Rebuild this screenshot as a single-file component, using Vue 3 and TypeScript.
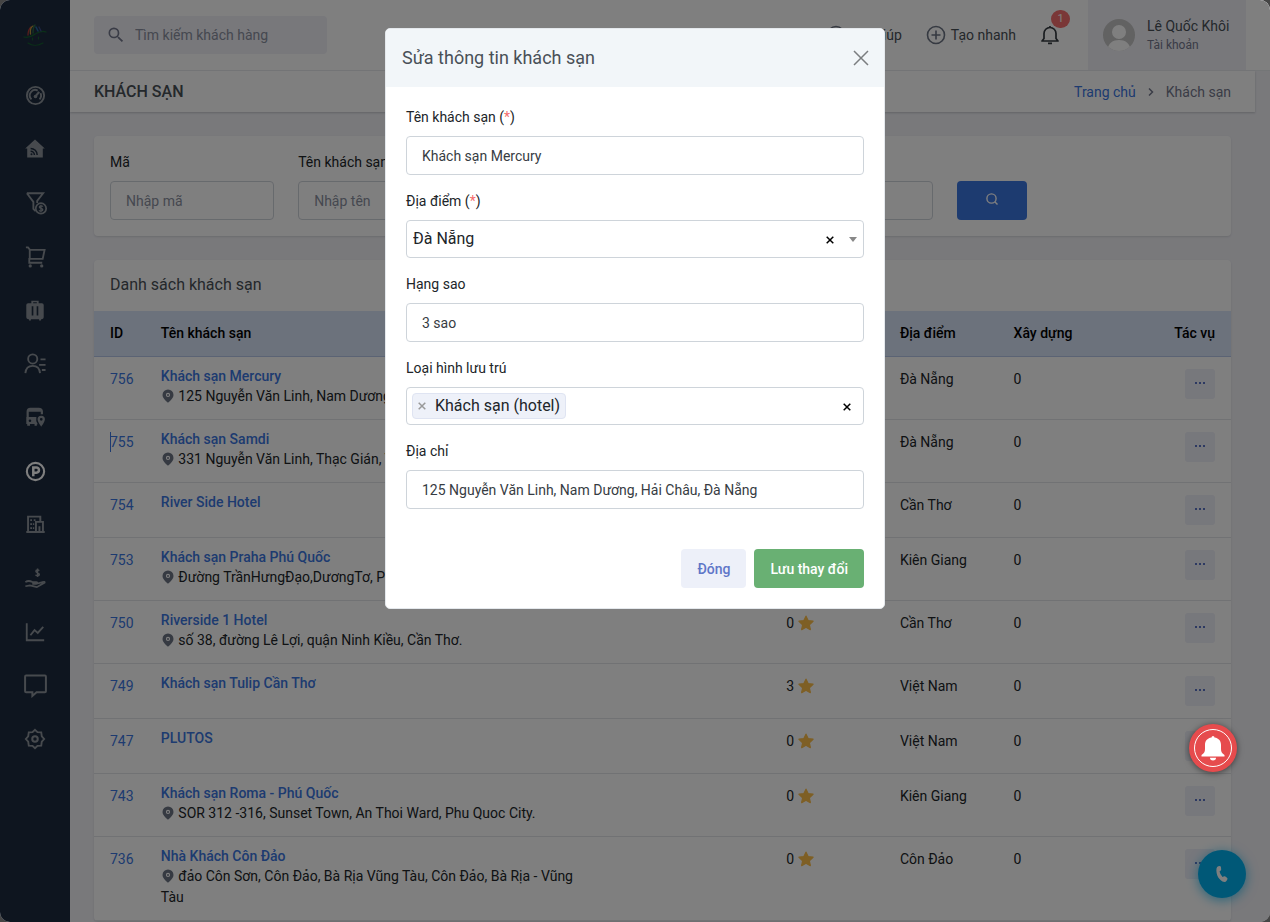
<script setup lang="ts">
import { ref } from 'vue'

interface NavItem { label: string; size: number; active?: boolean; art: string }
interface Hotel { id: number; name: string; address?: string; stars: number; place: string; caret?: boolean }

const navItems: NavItem[] = [
  { label: 'Tổng quan', size: 23, art: '<circle cx="12" cy="12" r="9" stroke-width="2"/><path d="M7.800 16A5.700 5.700 0 0 1 14.300 6.800M17.200 9.600A5.700 5.700 0 0 1 16.200 16" stroke-width="2"/><path d="M12 13L15.800 8.200" stroke-width="2.200"/><circle cx="12" cy="13" r="1.900" fill="currentColor" stroke="none"/>' },
  { label: 'Bảng tin', size: 24, art: '<path d="M12 2.500L21.800 11.500H19.800V20.500H4.200V11.500H2.200Z" fill="currentColor" stroke="none"/><g stroke="#1d2b3f" stroke-width="1.500"><path d="M7.600 11.400A6.600 6.600 0 0 1 14.200 18"/><path d="M7.600 14.200A3.800 3.800 0 0 1 11.400 18"/></g><circle cx="8.500" cy="17.200" r="1" fill="#1d2b3f" stroke="none"/>' },
  { label: 'Cơ hội', size: 26, art: '<path d="M4.500 3H19.500L14 10V12M4.500 3L10.500 11V17.500L12.500 19.500M14 10V11.500" stroke-width="1.700"/><circle cx="17.500" cy="17" r="4.800" stroke-width="1.600"/><path d="M19.200 15.300C18.700 14.400 16 14.300 16 15.800S19.200 16.800 19.200 18.300S16.300 19.700 15.800 18.600M17.500 13.500V20.500" stroke-width="1.200"/>' },
  { label: 'Đơn hàng', size: 23, art: '<path d="M2 2.500H4.200L6.200 5H21.500L19.500 14.500H5.500V18.500H19M6 5V14.500" stroke-width="1.900"/><circle cx="6.500" cy="21.800" r="1.700" fill="currentColor" stroke="none"/><circle cx="18.500" cy="21.800" r="1.700" fill="currentColor" stroke="none"/>' },
  { label: 'Tour', size: 22, art: '<path d="M8 2H16V4.500H19.500A2 2 0 0 1 21.500 6.500V20A2 2 0 0 1 19.500 22H18.500V23.500H16.500V22H7.500V23.500H5.500V22H4.500A2 2 0 0 1 2.500 20V6.500A2 2 0 0 1 4.500 4.500H8ZM10 3.500V4.500H14V3.500ZM8.400 8V18H10.200V8ZM13.800 8V18H15.600V8Z" fill="currentColor" fill-rule="evenodd" stroke="none"/>' },
  { label: 'Khách hàng', size: 22, art: '<circle cx="9.500" cy="6.500" r="5" stroke-width="2"/><path d="M1.500 22C2 16 6 14 9.500 14S17 16 17.500 22M18 7H23.500M16.500 13H23.500M19.500 18.500H23.500" stroke-width="2"/>' },
  { label: 'Điểm đến xe', size: 22, art: '<path d="M4 12V6Q4 3 7 3H16Q19.500 3 19.500 6V9M4 5H19" stroke-width="2.400"/><path d="M2.500 12H13.500Q12.500 16 15 20H14V21.500H11.500V19.500H6.500V21.500H3.500V19.500H2.500Z" fill="currentColor" stroke="none"/><circle cx="6.500" cy="16" r="1.400" fill="#1d2b3f" stroke="none"/><path d="M18.800 10.500A4 4 0 0 0 14.800 14.500C14.800 17.500 18.800 22.500 18.800 22.500S22.800 17.500 22.800 14.500A4 4 0 0 0 18.800 10.500ZM18.800 13A1.500 1.500 0 1 1 18.800 16A1.500 1.500 0 0 1 18.800 13Z" fill="currentColor" fill-rule="evenodd" stroke="none"/>' },
  { label: 'Nhà cung cấp', size: 23, active: true, art: '<circle cx="12" cy="12" r="9" stroke-width="2.200"/><path d="M9.700 17V7.800H12.900A2.600 2.600 0 0 1 12.900 13.200H9.700" stroke-width="2.600"/>' },
  { label: 'Doanh nghiệp', size: 21, art: '<path d="M3.500 20V3H17.500V8M1.500 20.500H22.500M12.500 20V9H20.500V20M16.500 20V14" stroke-width="2.200"/><path d="M6 6H8V8H6ZM10 6H12V8H10ZM6 10.500H8V12.500H6ZM9 10.500H10.500V12.500H9ZM6 15H8V17H6ZM9 15H10.500V17H9Z" fill="currentColor" stroke="none"/>' },
  { label: 'Tài chính', size: 22, art: '<path d="M16.500 4.200C16 2.800 13 2.800 13 4.700S16.700 6.200 16.700 8.100S13.300 10 12.700 8.500M14.800 1.500V11" stroke-width="1.600"/><path d="M1.500 16.500C5 14 7.500 15.500 9.500 16.500H13.500C15 16.500 15 18.500 13 18.500H9M15 18L20 16.500Q23 15.500 22.500 17L14 22L6.500 20L1.500 21" stroke-width="1.900"/>' },
  { label: 'Báo cáo', size: 22, art: '<path d="M3 2.500V21H22M7 15.500L11.500 10L15 13L21 6.500" stroke-width="2"/>' },
  { label: 'Tin nhắn', size: 25, art: '<path d="M3 2.500H21Q22 2.500 22 3.500V17.500Q22 18.500 21 18.500H13L9 22V18.500H3Q2 18.500 2 17.500V3.500Q2 2.500 3 2.500Z" stroke-width="1.900"/>' },
  { label: 'Cài đặt', size: 22, art: '<path d="M12 2L14.700 4.600L18.800 4.800L19.400 9L22 12L19.400 15L18.800 19.200L14.700 19.400L12 22L9.300 19.400L5.200 19.200L4.600 15L2 12L4.600 9L5.200 4.800L9.300 4.600Z" stroke-width="2"/><circle cx="12" cy="12" r="3" stroke-width="2.200"/>' },
]

const hotels: Hotel[] = [
  { id: 756, name: 'Khách sạn Mercury', address: '125 Nguyễn Văn Linh, Nam Dương, Hải Châu', stars: 3, place: 'Đà Nẵng' },
  { id: 755, name: 'Khách sạn Samdi', address: '331 Nguyễn Văn Linh, Thạc Gián, Thanh Khê', stars: 4, place: 'Đà Nẵng', caret: true },
  { id: 754, name: 'River Side Hotel', stars: 0, place: 'Cần Thơ' },
  { id: 753, name: 'Khách sạn Praha Phú Quốc', address: 'Đường TrầnHưngĐạo,DươngTơ, Phú Quốc', stars: 0, place: 'Kiên Giang' },
  { id: 750, name: 'Riverside 1 Hotel', address: 'số 38, đường Lê Lợi, quận Ninh Kiều, Cần Thơ.', stars: 0, place: 'Cần Thơ' },
  { id: 749, name: 'Khách sạn Tulip Cần Thơ', stars: 3, place: 'Việt Nam' },
  { id: 747, name: 'PLUTOS', stars: 0, place: 'Việt Nam' },
  { id: 743, name: 'Khách sạn Roma - Phú Quốc', address: 'SOR 312 -316, Sunset Town, An Thoi Ward, Phu Quoc City.', stars: 0, place: 'Kiên Giang' },
  { id: 736, name: 'Nhà Khách Côn Đảo', address: 'đảo Côn Sơn, Côn Đảo, Bà Rịa Vũng Tàu, Côn Đảo, Bà Rịa - Vũng Tàu', stars: 0, place: 'Côn Đảo' },
]

const name = ref('Khách sạn Mercury')
const place = ref('Đà Nẵng')
const rank = ref('3 sao')
const address = ref('125 Nguyễn Văn Linh, Nam Dương, Hải Châu, Đà Nẵng')
const tags = ref<string[]>(['Khách sạn (hotel)'])
</script>

<template>
  <div class="app">
    <aside class="sidebar">
      <a href="#" class="logo" aria-label="Trang chủ">
        <svg width="24" height="24" viewBox="0 0 24 24" fill="none" stroke-linecap="round">
          <path d="M1 14C6 16 10 12 14 10S21 8 23 9" stroke="#14602f" stroke-width="1.300" />
          <path d="M5 12C5 8 7 5 8 4" stroke="#b03a36" stroke-width="1.300" />
          <path d="M7.500 11C7 7 8 4 10 3" stroke="#b8983a" stroke-width="1.300" />
          <path d="M10 10C10 6 11 3 12 2" stroke="#2a6c44" stroke-width="1.300" />
          <path d="M13 4L15 8" stroke="#2468a0" stroke-width="1.500" />
          <path d="M16 4L18 8" stroke="#3a4988" stroke-width="1.300" />
          <path d="M9.500 15V17M15.500 14V16M5 20C9 23 15 23 20 20" stroke="#14602f" stroke-width="1.100" />
        </svg>
      </a>
      <nav class="side-nav">
        <a v-for="item in navItems" :key="item.label" href="#" :class="{ active: item.active }" :aria-label="item.label">
          <svg :width="item.size" :height="item.size" viewBox="0 0 24 24" fill="none" stroke="currentColor" v-html="item.art"></svg>
        </a>
      </nav>
    </aside>

    <div class="main">
      <header class="topbar">
        <label class="global-search">
          <svg width="20" height="20" viewBox="0 0 24 24" fill="currentColor"><path d="M9.500 3A6.500 6.500 0 0 1 16 9.500C16 11.110 15.410 12.590 14.440 13.730L14.710 14H15.500L20.500 19L19 20.500L14 15.500V14.710L13.730 14.440C12.590 15.410 11.110 16 9.500 16A6.500 6.500 0 0 1 9.500 3M9.500 5A4.500 4.500 0 0 0 9.500 14A4.500 4.500 0 0 0 9.500 5Z" /></svg>
          <input type="search" placeholder="Tìm kiếm khách hàng" aria-label="Tìm kiếm khách hàng" />
        </label>
        <div class="top-actions">
          <a href="#" class="top-link">
            <svg width="20" height="20" viewBox="0 0 20 20" fill="none" stroke="currentColor" stroke-width="1.600"><circle cx="10" cy="10" r="8.500" /><path d="M7.500 8A2.500 2.500 0 1 1 10 10.500V12M10 14V15" /></svg>
            Trợ giúp
          </a>
          <a href="#" class="top-link">
            <svg width="20" height="20" viewBox="0 0 20 20" fill="none" stroke="currentColor" stroke-width="1.600"><circle cx="10" cy="10" r="8.500" /><path d="M10 5.500V14.500M5.500 10H14.500" /></svg>
            Tạo nhanh
          </a>
          <button type="button" class="bell" aria-label="Thông báo">
            <svg width="20" height="20" viewBox="0 0 20 20" fill="none" stroke="currentColor" stroke-width="1.700"><path d="M2 16H18L16 13.500V8.500A6 6 0 0 0 4 8.500V13.500Z" stroke-linejoin="round" /><path d="M8 18.300H12M10 1V2.500" /></svg>
            <span class="badge">1</span>
          </button>
          <a href="#" class="account">
            <svg width="32" height="32" viewBox="0 0 32 32"><defs><clipPath id="face"><circle cx="16" cy="16" r="16" /></clipPath></defs><g clip-path="url(#face)"><rect width="32" height="32" fill="#c4c4c4" /><circle cx="16" cy="13" r="7" fill="#fff" /><path d="M4 32C5 24 10 21 16 21S27 24 28 32Z" fill="#fff" /></g></svg>
            <span class="who"><span>Lê Quốc Khôi</span><small>Tài khoản</small></span>
          </a>
        </div>
      </header>

      <div class="body">
        <div class="titlebar">
          <h1>KHÁCH SẠN</h1>
          <nav class="crumbs" aria-label="Đường dẫn">
            <a href="#">Trang chủ</a>
            <svg width="6" height="8" viewBox="0 0 6 8" fill="none" stroke="currentColor" stroke-width="1.500"><path d="M1 0.500L4.500 4L1 7.500" /></svg>
            <span>Khách sạn</span>
          </nav>
        </div>

        <main class="content">
          <form class="card filter" @submit.prevent>
            <div class="field span2"><label for="f-code">Mã</label><input id="f-code" class="control" placeholder="Nhập mã" /></div>
            <div class="field span4"><label for="f-name">Tên khách sạn</label><input id="f-name" class="control" placeholder="Nhập tên" /></div>
            <div class="field span3"><input class="control" aria-label="Địa điểm" /></div>
            <button type="submit" class="go" aria-label="Tìm kiếm">
              <svg width="14" height="14" viewBox="0 0 14 14" fill="none" stroke="currentColor" stroke-width="1.400"><circle cx="6.500" cy="6.500" r="4.600" /><path d="M10 10L12.500 12.500" /></svg>
            </button>
          </form>

          <section class="card list">
            <h2>Danh sách khách sạn</h2>
            <table>
              <colgroup><col class="w5" /><col class="w40" /><col class="w15" /><col class="w10" /><col class="w10" /><col class="w10" /><col class="w10" /></colgroup>
              <thead>
                <tr><th>ID</th><th>Tên khách sạn</th><th></th><th>Hạng sao</th><th>Địa điểm</th><th>Xây dựng</th><th class="end">Tác vụ</th></tr>
              </thead>
              <tbody>
                <tr v-for="h in hotels" :key="h.id">
                  <td><a href="#" :class="{ caret: h.caret }">{{ h.id }}</a></td>
                  <td class="name-cell">
                    <a href="#" class="name">{{ h.name }}</a>
                    <div v-if="h.address">
                      <svg class="pin" width="14" height="14" viewBox="0 0 14 14"><path d="M7 0.500A5.500 5.500 0 0 0 1.500 6C1.500 9.700 7 13.700 7 13.700S12.500 9.700 12.500 6A5.500 5.500 0 0 0 7 0.500ZM7 3.800A2.100 2.100 0 1 1 7 8A2.100 2.100 0 0 1 7 3.800Z" fill="#6c7484" fill-rule="evenodd" /><circle cx="7" cy="5.900" r="1" fill="#6c7484" /></svg>
                      {{ h.address }}
                    </div>
                  </td>
                  <td></td>
                  <td>{{ h.stars }} <svg class="star" width="16" height="16" viewBox="0 0 20 20"><path d="M10 1.500L12.600 7L18.800 7.800L14.200 12.200L15.400 18.300L10 15.300L4.600 18.300L5.800 12.200L1.200 7.800L7.400 7Z" fill="#fcbe4a" stroke="#fcbe4a" stroke-width="1.600" stroke-linejoin="round" /></svg></td>
                  <td>{{ h.place }}</td>
                  <td>0</td>
                  <td class="end">
                    <button type="button" class="more" aria-label="Tác vụ">
                      <svg width="10" height="2" viewBox="0 0 10 2" fill="currentColor"><path d="M0 0H2V2H0ZM4 0H6V2H4ZM8 0H10V2H8Z" /></svg>
                    </button>
                  </td>
                </tr>
              </tbody>
            </table>
          </section>
        </main>
      </div>
    </div>

    <button type="button" class="phone" aria-label="Gọi điện">
      <svg width="16" height="20" viewBox="0 0 16 20" fill="currentColor"><path d="M4.300 2.200L5.600 2Q6.700 2 6.900 3L7.200 5.500Q7.200 6.600 5.500 7.600Q6.200 10.700 8.500 13Q10 12 11 12.300L13 13.700Q13.900 14.500 13.300 15.500L12.600 16.800Q11.800 18 10.500 18C5 17 1.700 10.500 2.500 4.500Q2.800 2.800 4.300 2.200Z" /></svg>
    </button>

    <div class="backdrop">
      <form class="modal" role="dialog" aria-labelledby="modal-title" @submit.prevent>
        <header class="modal-head">
          <h2 id="modal-title">Sửa thông tin khách sạn</h2>
          <button type="button" aria-label="Đóng cửa sổ">
            <svg width="16" height="16" viewBox="0 0 16 16" stroke="currentColor" stroke-width="1.500"><path d="M1 1L15 15M15 1L1 15" /></svg>
          </button>
        </header>
        <div class="modal-body">
          <div class="field">
            <label for="m-name">Tên khách sạn (<i>*</i>)</label>
            <input id="m-name" v-model="name" class="control" />
          </div>
          <div class="field">
            <label for="m-place">Địa điểm (<i>*</i>)</label>
            <div class="picker">
              <select id="m-place" v-model="place"><option>Đà Nẵng</option><option>Cần Thơ</option><option>Kiên Giang</option></select>
              <button type="button" class="clear shifted" aria-label="Xóa địa điểm" @click="place = ''"><svg width="8" height="8" viewBox="0 0 8 8" stroke="currentColor" stroke-width="1.500"><path d="M0.700 0.700L7.300 7.300M7.300 0.700L0.700 7.300" /></svg></button>
              <span class="arrow"></span>
            </div>
          </div>
          <div class="field">
            <label for="m-rank">Hạng sao</label>
            <select id="m-rank" v-model="rank" class="control"><option>3 sao</option><option>4 sao</option><option>5 sao</option></select>
          </div>
          <div class="field">
            <label for="m-type">Loại hình lưu trú</label>
            <div class="picker tags">
              <span v-for="t in tags" :key="t" class="tag">
                <button type="button" aria-label="Bỏ chọn" @click="tags = tags.filter(x => x !== t)"><svg width="8" height="8" viewBox="0 0 8 8" stroke="currentColor" stroke-width="1.500"><path d="M0.700 0.700L7.300 7.300M7.300 0.700L0.700 7.300" /></svg></button>
                {{ t }}
              </span>
              <input id="m-type" type="text" />
              <button type="button" class="clear" aria-label="Xóa loại hình" @click="tags = []"><svg width="8" height="8" viewBox="0 0 8 8" stroke="currentColor" stroke-width="1.500"><path d="M0.700 0.700L7.300 7.300M7.300 0.700L0.700 7.300" /></svg></button>
            </div>
          </div>
          <div class="field">
            <label for="m-address">Địa chỉ</label>
            <input id="m-address" v-model="address" class="control" />
          </div>
        </div>
        <footer class="modal-foot">
          <button type="button" class="btn light">Đóng</button>
          <button type="submit" class="btn success">Lưu thay đổi</button>
        </footer>
      </form>
    </div>

    <button type="button" class="alarm" aria-label="Nhắc việc">
      <svg width="24" height="26" viewBox="0 0 24 26" fill="currentColor"><path d="M10.500 2.500A1.500 1.500 0 0 1 13.500 2.500C18 3.200 20 6 20 10V14C20 17 21 18.500 23.500 20V21.500H0.500V20C3 18.500 4 17 4 14V10C4 6 6 3.200 10.500 2.500ZM9 22.800H15A3 2.600 0 0 1 9 22.800Z" /></svg>
    </button>
  </div>
</template>

<style>
html {
  background: #454545;
}
body {
  margin: 0;
}
</style>

<style scoped>
.app {
  position: relative;
  display: flex;
  height: 100vh;
  overflow: hidden;
  border-radius: 10px;
  background: #f2f2f7;
  font: 14px/20px Roboto, "Noto Sans", sans-serif;
  color: #212529;
}
.app *,
.app *::before {
  box-sizing: border-box;
}
a {
  color: #3b76e1;
  text-decoration: none;
}
button,
input,
select {
  font: inherit;
  color: inherit;
}
button {
  display: flex;
  align-items: center;
  justify-content: center;
  padding: 0;
  border: 0;
  background: none;
}
h1,
h2 {
  margin: 0;
  font-weight: 400;
  color: #495057;
}

.sidebar {
  flex: none;
  width: 70px;
  background: #1d2b3f;
}
.logo {
  display: flex;
  height: 69px;
  align-items: center;
  justify-content: center;
}
.side-nav {
  display: flex;
  flex-direction: column;
  height: 697px;
}
.side-nav a {
  flex: 1;
  display: flex;
  align-items: center;
  justify-content: center;
  color: #8e959c;
}
.side-nav a.active {
  color: #fff;
}

.main {
  flex: 1;
  min-width: 0;
}
.topbar {
  display: flex;
  align-items: center;
  justify-content: space-between;
  height: 71px;
  padding: 0 24px;
  background: #fff;
  border-bottom: 1px solid #e9ecef;
}
.global-search {
  display: flex;
  align-items: center;
  gap: 9px;
  width: 233px;
  height: 38px;
  padding: 0 12px;
  border-radius: 4px;
  background: #f0f0f7;
  color: #74788d;
}
.global-search svg {
  flex: none;
}
.global-search input {
  width: 100%;
  border: 0;
  padding: 0;
  background: none;
  outline: 0;
}
input::placeholder {
  color: #8b90a0;
  opacity: 1;
}
.top-actions {
  display: flex;
  align-items: center;
}
.top-link {
  display: flex;
  align-items: center;
  gap: 5px;
  margin-right: 24px;
  color: #495057;
}
.top-link svg {
  color: #6c7484;
}
.bell {
  position: relative;
  margin-right: 28px;
  color: #343a40;
}
.badge {
  position: absolute;
  left: 11px;
  top: -15px;
  min-width: 19px;
  border-radius: 10px;
  background: #f56e6e;
  color: #fff;
  font-size: 11px;
  line-height: 18px;
}
.account {
  display: flex;
  align-items: center;
  gap: 12px;
  height: 70px;
  padding: 0 15px;
  background: #f0f0f7;
  color: #495057;
}
.who {
  display: flex;
  flex-direction: column;
  min-width: 84px;
}
.who small {
  font-size: 12px;
  line-height: 18px;
  color: #74788d;
}

.body {
  margin-right: 15px;
}
.titlebar {
  display: flex;
  align-items: center;
  justify-content: space-between;
  height: 41px;
  padding: 0 24px;
  background: #fff;
  box-shadow: 0 1px 2px rgba(56, 65, 74, 0.25);
}
h1 {
  font-size: 16px;
  font-weight: 500;
}
.crumbs {
  display: flex;
  align-items: center;
  gap: 12px;
  color: #74788d;
}
.content {
  padding: 24px;
}
.card {
  border-radius: 4px;
  background: #fff;
  box-shadow: 0 1px 2px rgba(56, 65, 74, 0.15);
}
.filter {
  display: grid;
  grid-template-columns: repeat(12, 1fr);
  column-gap: 24px;
  align-items: end;
  margin-bottom: 24px;
  padding: 16px;
}
.span2 {
  grid-column: span 2;
}
.span3 {
  grid-column: span 3;
}
.span4 {
  grid-column: span 4;
}
.field label {
  display: block;
  margin-bottom: 9px;
}
.control {
  display: block;
  width: 100%;
  height: 39px;
  padding: 0 15px;
  border: 1px solid #ced4da;
  border-radius: 4px;
  background: #fff;
  color: #373c43;
  appearance: none;
}
.go {
  height: 39px;
  padding-bottom: 4px;
  border-radius: 4px;
  background: #3b76e1;
  color: #fff;
}
.list h2 {
  padding: 15px 16px 16px;
  font-size: 16px;
}
table {
  width: 100%;
  table-layout: fixed;
  border-collapse: collapse;
}
.w5 {
  width: 5%;
}
.w10 {
  width: 10%;
}
.w15 {
  width: 15%;
}
.w40 {
  width: 40%;
}
th {
  height: 45px;
  padding: 0 10px;
  border-bottom: 1px solid #b6c6e8;
  background: #d8e4f8;
  font-weight: 500;
  text-align: left;
  color: #000;
}
td {
  padding: 12px 10px;
  border-bottom: 1px solid #e2e5e8;
  line-height: 21px;
  vertical-align: top;
}
td:first-child,
th:first-child {
  padding-left: 16px;
}
td.end,
th.end {
  padding-right: 16px;
  text-align: right;
}
td.name-cell {
  padding-top: 9px;
}
.name {
  display: block;
  font-weight: 500;
  line-height: 20px;
}
.caret {
  display: inline-block;
  position: relative;
}
.caret::before {
  content: "";
  position: absolute;
  left: 0;
  top: 0;
  width: 1px;
  height: 20px;
  background: #3b76e1;
}
.pin {
  vertical-align: -2px;
}
.star {
  vertical-align: -3px;
}
.more {
  width: 30px;
  height: 30px;
  margin-left: auto;
  padding-bottom: 2px;
  border-radius: 3px;
  background: #eef0f9;
  color: #5b73c4;
}

.phone,
.alarm {
  position: absolute;
  width: 48px;
  height: 48px;
  border-radius: 50%;
  color: #fff;
}
.phone {
  right: 24px;
  bottom: 24px;
  background: #00b0ef;
  box-shadow: 0 2px 12px rgba(0, 176, 239, 0.7);
}
.alarm {
  right: 33px;
  bottom: 150px;
  background: #e64b4d;
  box-shadow: 0 1px 6px rgba(0, 0, 0, 0.5);
}
.alarm::before {
  content: "";
  position: absolute;
  inset: 5px;
  border: 1px solid #fff;
  border-radius: 50%;
}

.backdrop {
  position: absolute;
  inset: 0;
  padding: 28px 0;
  background: rgba(0, 0, 0, 0.5);
}
.modal {
  width: 500px;
  margin: 0 auto;
  border: 1px solid #e4e8ec;
  border-radius: 5px;
  background: #fff;
  overflow: hidden;
}
.modal-head {
  display: flex;
  align-items: center;
  justify-content: space-between;
  height: 58px;
  padding: 0 15px 0 16px;
  background: #f2f6f9;
}
.modal-head h2 {
  font-size: 18px;
}
.modal-head button {
  color: #7b7e80;
}
.modal-body {
  padding: 20px 20px 0;
}
.modal-body .field {
  margin-bottom: 16px;
}
.modal-body label i {
  font-style: normal;
  color: #f56e6e;
}
.picker {
  position: relative;
  height: 38px;
  border: 1px solid #ced4da;
  border-radius: 4px;
  font-size: 16px;
}
.picker select {
  width: 100%;
  height: 36px;
  padding: 0 6px;
  border: 0;
  background: none;
  appearance: none;
}
.clear {
  position: absolute;
  top: 15px;
  right: 12px;
  color: #000;
}
.clear.shifted {
  right: 29px;
}
.arrow {
  position: absolute;
  top: 16px;
  right: 6px;
  border: 4px solid transparent;
  border-top: 5px solid #888;
  border-bottom: 0;
  pointer-events: none;
}
.tags {
  display: flex;
  align-items: center;
  padding: 0 5px;
}
.tag {
  display: flex;
  align-items: center;
  gap: 9px;
  height: 26px;
  padding: 0 5px;
  border: 1px solid #dfe4f2;
  border-radius: 4px;
  background: #eef1f9;
}
.tag button {
  color: #999;
}
.tags input {
  flex: 1;
  min-width: 0;
  border: 0;
  background: none;
  outline: 0;
}
.modal-foot {
  display: flex;
  justify-content: flex-end;
  gap: 8px;
  padding: 24px 20px 20px;
}
.btn {
  height: 39px;
  padding: 0 16px;
  border-radius: 4px;
  font-weight: 500;
}
.light {
  background: #edf0f9;
  color: #5f76c8;
}
.success {
  background: #69b073;
  color: #fff;
}
</style>
